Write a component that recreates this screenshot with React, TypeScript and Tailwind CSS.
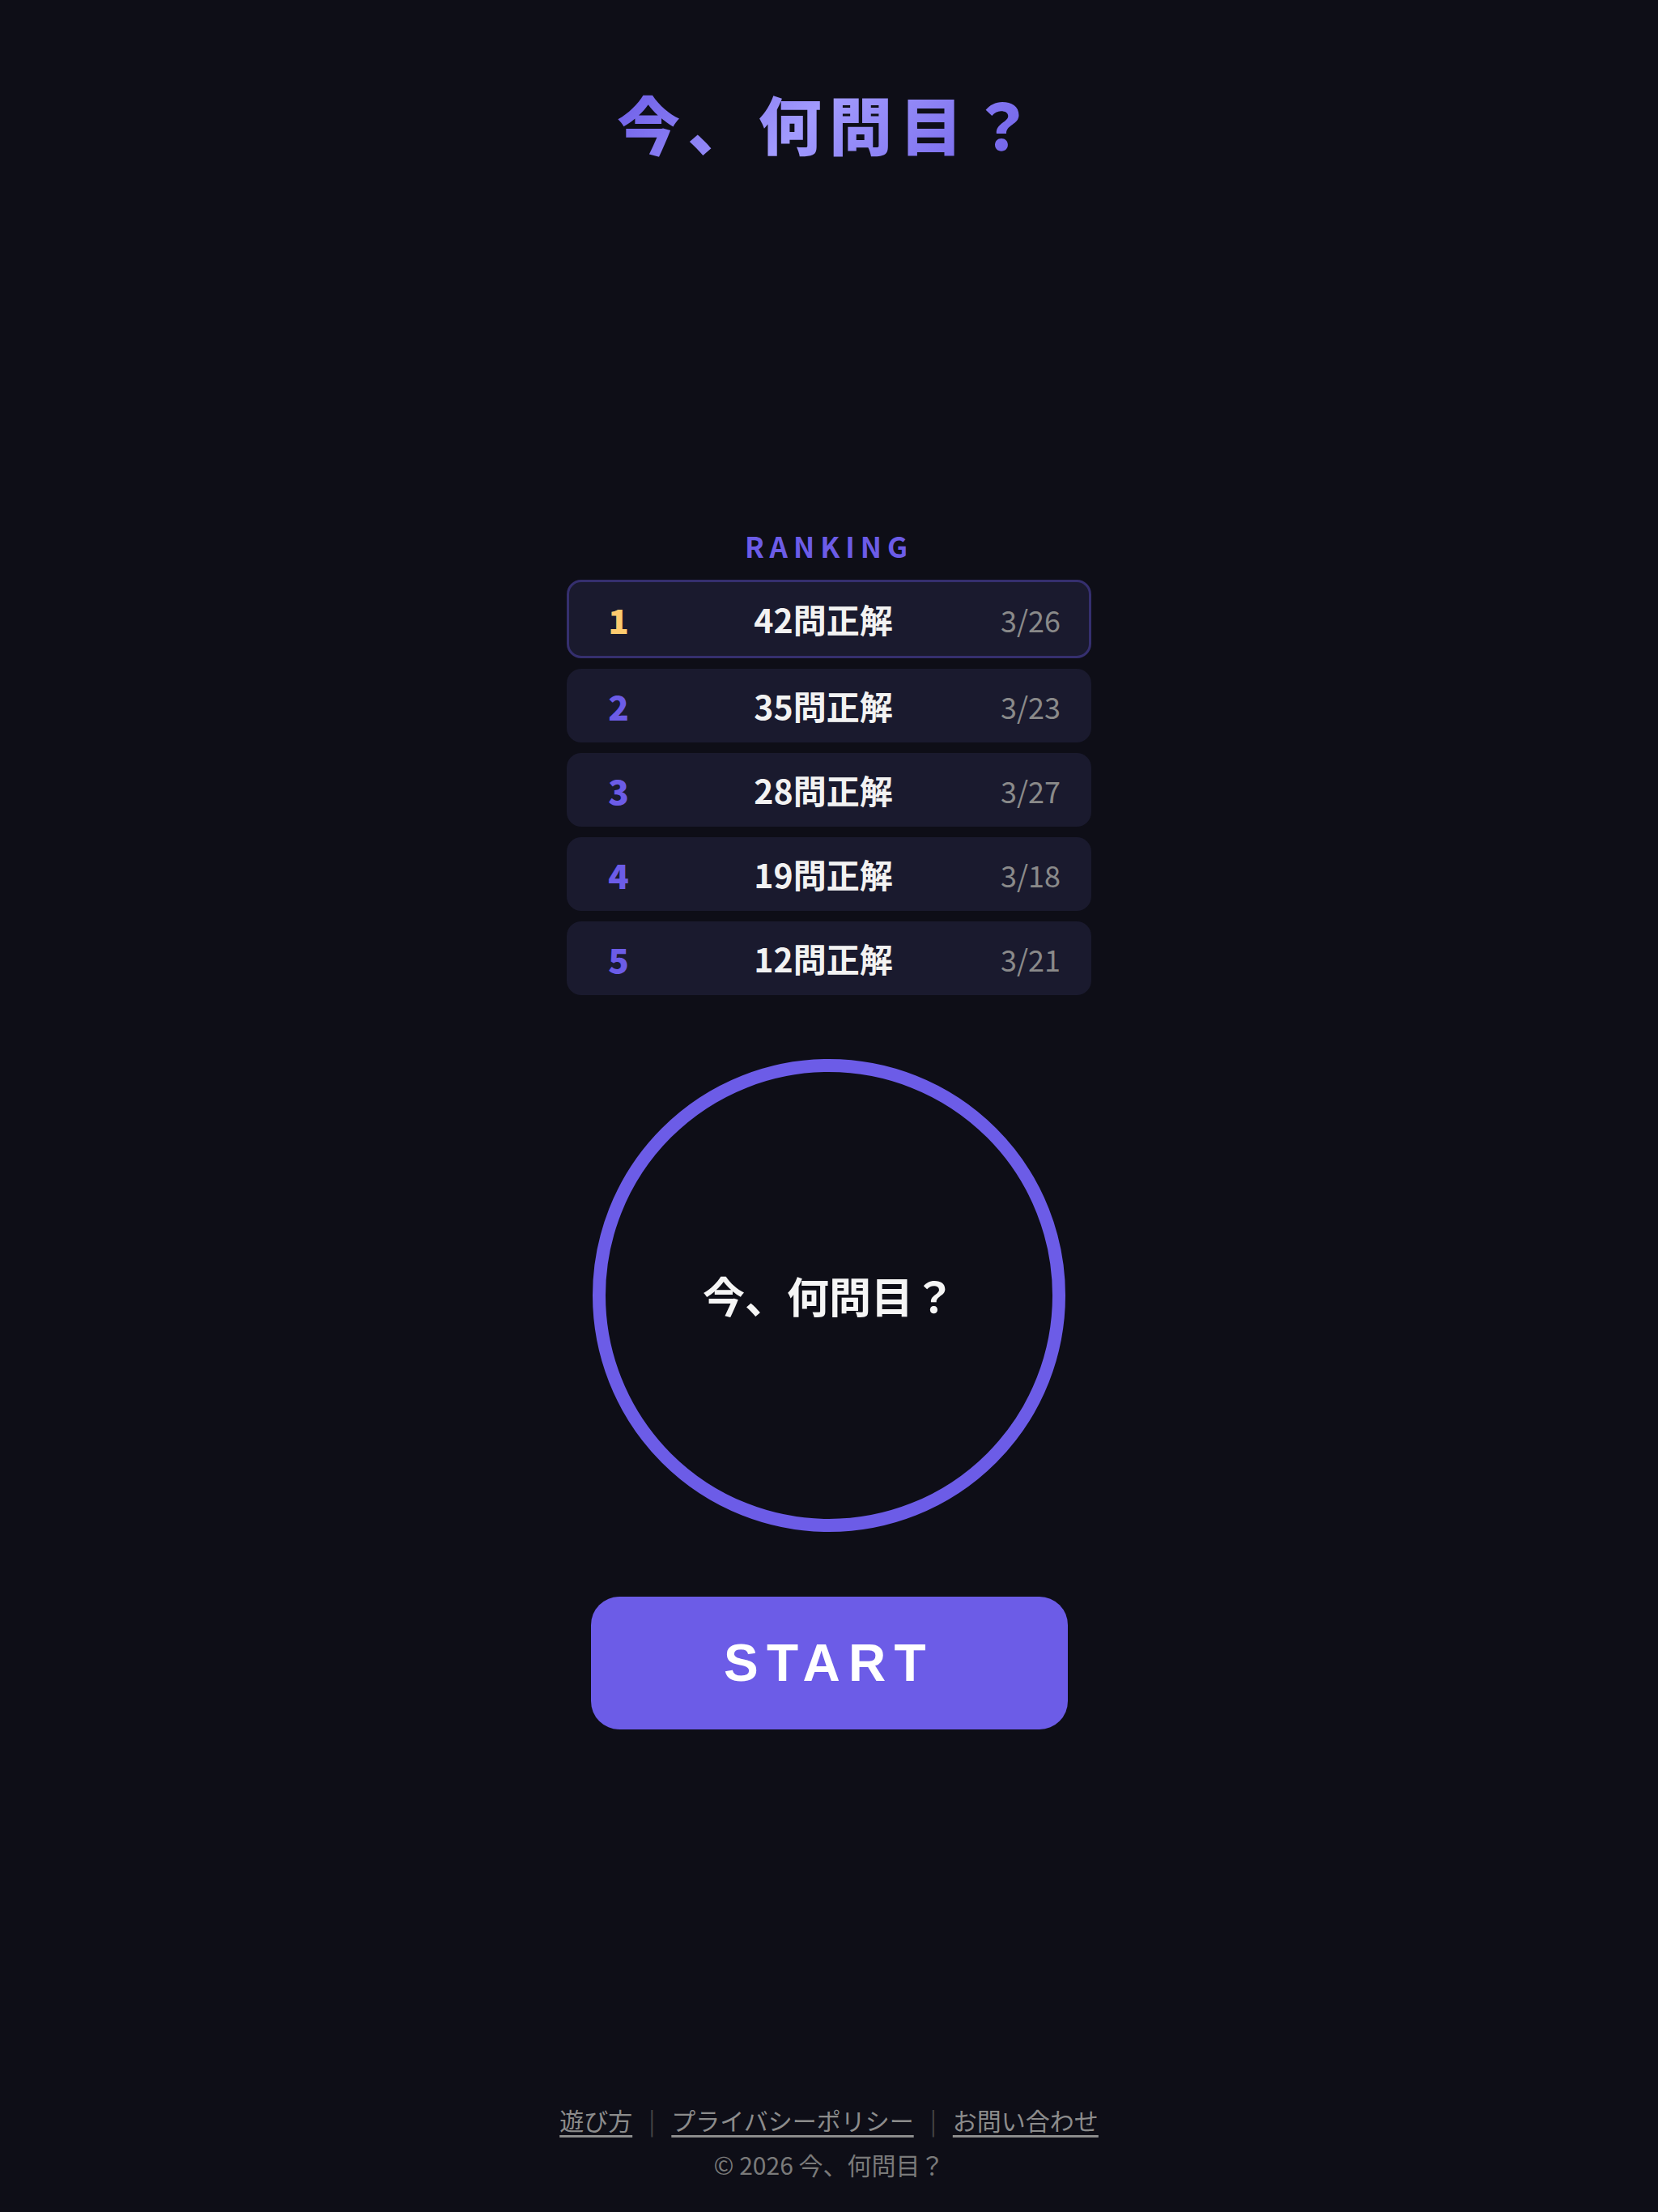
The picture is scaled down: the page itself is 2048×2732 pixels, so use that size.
import React from 'react';

const ranking = [
  { rank: 1, score: 42, date: '3/26' },
  { rank: 2, score: 35, date: '3/23' },
  { rank: 3, score: 28, date: '3/27' },
  { rank: 4, score: 19, date: '3/18' },
  { rank: 5, score: 12, date: '3/21' },
];

const RankRow = ({ rank, score, date }: { rank: number; score: number; date: string }) => {
  const top = rank === 1;
  return (
    <div
      className={`flex items-center rounded-[18px] bg-[#1a1a2e] ${
        top ? 'h-[97px] border-[3px] border-[#352f6e] pl-[33px] pr-[35px]' : 'h-[91px] pl-[36px] pr-[38px]'
      }`}
    >
      <span className={`w-[56px] text-center text-[42px] font-black ${top ? 'text-[#fdcb6e]' : 'text-[#6c5ce7]'}`}>
        {rank}
      </span>
      <span className="flex-1 pl-[6px] text-center text-[41px] font-bold text-[#f2f2f2]">{score}問正解</span>
      <span className="text-[36px] text-[#8a8a8a]">{date}</span>
    </div>
  );
};

export default function App() {
  return (
    <div
      className="flex min-h-screen flex-col items-center bg-[#0e0e17]"
      style={{ fontFamily: '"Noto Sans CJK JP", "Noto Sans", sans-serif' }}
    >
      <header className="pt-[106px]">
        <h1 className="bg-[linear-gradient(135deg,#6c5ce7_0%,#a29bfe_45%,#6c5ce7_100%)] bg-clip-text text-[78px] font-black leading-[1.2] tracking-[0.12em] text-transparent">
          今、何問目？
        </h1>
      </header>

      <main className="mt-[448px] flex flex-col items-center">
        <section className="flex w-[648px] flex-col">
          <h2 className="text-center text-[35px] font-bold leading-[1.5] tracking-[0.2em] text-[#6c5ce7]">
            RANKING
          </h2>
          <div className="mt-[16px] flex flex-col gap-[13px]">
            {ranking.map((r) => (
              <RankRow key={r.rank} {...r} />
            ))}
          </div>
        </section>

        <div className="mt-[79px] flex h-[584px] w-[584px] items-center justify-center rounded-full border-[16px] border-[#6c5ce7]">
          <span className="text-[52px] font-bold text-[#f5f5f5]">今、何問目？</span>
        </div>

        <button
          className="mt-[80px] flex h-[164px] w-[589px] items-center justify-center rounded-[35px] bg-[#6c5ce7] text-[64px] font-bold tracking-[0.16em] text-white"
          style={{ fontFamily: '"Liberation Sans", Arial, sans-serif' }}
        >
          START
        </button>
      </main>

      <footer className="mt-auto flex flex-col items-center pb-[36px] text-[30px] leading-[1.5]">
        <nav className="flex items-center text-[#8c8c8c]">
          <a href="#" className="underline underline-offset-[6px]">遊び方</a>
          <span className="mx-[20px] text-[#444]">|</span>
          <a href="#" className="underline underline-offset-[6px]">プライバシーポリシー</a>
          <span className="mx-[20px] text-[#444]">|</span>
          <a href="#" className="underline underline-offset-[6px]">お問い合わせ</a>
        </nav>
        <p className="mt-[10px] text-[#7a7a7a]">© 2026 今、何問目？</p>
      </footer>
    </div>
  );
}
